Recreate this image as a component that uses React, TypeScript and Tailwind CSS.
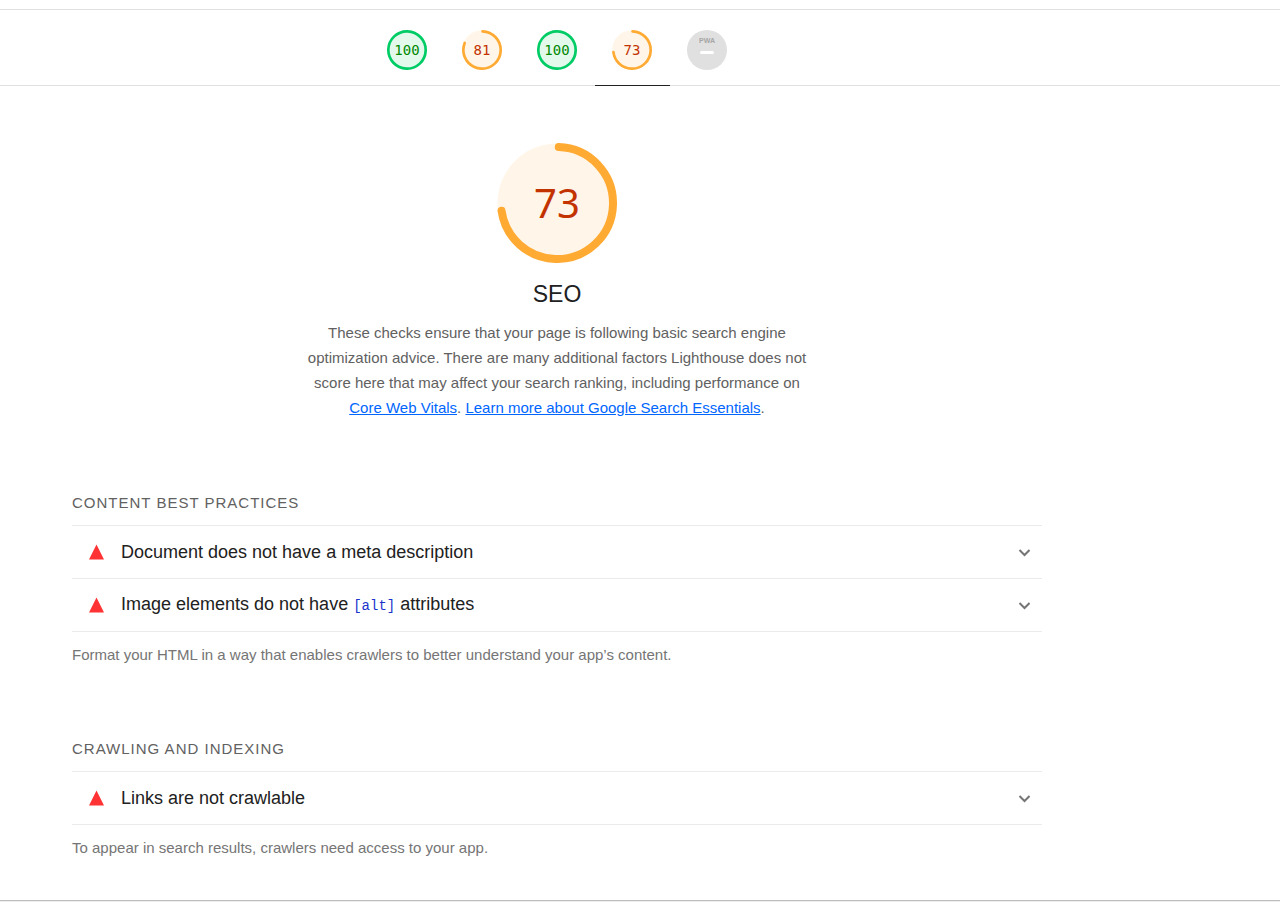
import type { ReactNode } from "react";

type Tone = "pass" | "average";

const tones: Record<Tone, { ring: string; fill: string; text: string }> = {
  pass: { ring: "stroke-[#00cc66]", fill: "fill-[#e2f9ec]", text: "text-[#008800]" },
  average: { ring: "stroke-[#ffaa33]", fill: "fill-[#fff5e8]", text: "text-[#c33300]" },
};

function GaugeRing({ score, tone }: { score: number; tone: Tone }) {
  const full = score === 100;
  const arc = score * 3.6 - 2.6;
  return (
    <svg viewBox="0 0 120 120" className="col-start-1 row-start-1 size-full" aria-hidden="true">
      <circle cx="60" cy="60" r="59.5" className={tones[tone].fill} />
      <circle
        cx="60"
        cy="60"
        r="56"
        fill="none"
        strokeWidth="8"
        strokeLinecap="round"
        pathLength={360}
        strokeDasharray={full ? undefined : `${arc} 360`}
        transform="rotate(-88.2 60 60)"
        className={tones[tone].ring}
      />
    </svg>
  );
}

const categories: { id: string; label: string; score: number; tone: Tone }[] = [
  { id: "performance", label: "Performance", score: 100, tone: "pass" },
  { id: "accessibility", label: "Accessibility", score: 81, tone: "average" },
  { id: "best-practices", label: "Best Practices", score: 100, tone: "pass" },
  { id: "seo", label: "SEO", score: 73, tone: "average" },
];

function Audit({ children }: { children: ReactNode }) {
  return (
    <li className="border-b border-[#ebebeb]">
      <button type="button" className="flex h-[52px] w-full items-center pr-3 pl-4 text-left">
        <svg viewBox="0 0 16 16" className="size-4 shrink-0 fill-[#ff3333]" aria-hidden="true">
          <path d="M8.500 .5 16 15.500H1Z" />
        </svg>
        <span className="ml-[17px] flex-1 text-[18px] leading-6 text-[#212121]">{children}</span>
        <svg
          viewBox="0 0 12 12"
          className="size-3 shrink-0 fill-none stroke-[#757575] stroke-2"
          aria-hidden="true"
        >
          <path d="m1.500 4 5 5 5-5" />
        </svg>
      </button>
    </li>
  );
}

function AuditGroup({ title, note, children }: { title: string; note: string; children: ReactNode }) {
  return (
    <section>
      <h2 className="text-[15px] leading-6 tracking-[1px] text-[#616161] uppercase">{title}</h2>
      <ul className="mt-[10px] border-t border-[#ebebeb]">{children}</ul>
      <p className="mt-[11px] text-[15px] leading-6 text-[#757575]">{note}</p>
    </section>
  );
}

export default function App() {
  return (
    <div className="bg-white pt-[9px] font-['Liberation_Sans',Arial,sans-serif] text-[#212121]">
      <nav className="border-y border-[#e0e0e0]" aria-label="Report categories">
        <div className="-mb-px flex max-w-[1114px] justify-center">
          {categories.map((c) => (
            <a
              key={c.id}
              href={`#${c.id}`}
              aria-label={`${c.label}: ${c.score}`}
              className={`flex h-[76px] w-[75px] justify-center border-b pt-5 ${
                c.id === "seo" ? "border-[#212121]" : "border-transparent"
              }`}
            >
              <span className="grid size-10 place-items-center">
                <GaugeRing score={c.score} tone={c.tone} />
                <span
                  className={`col-start-1 row-start-1 font-['DejaVu_Sans_Mono',monospace] text-[14px] leading-5 ${tones[c.tone].text}`}
                >
                  {c.score}
                </span>
              </span>
            </a>
          ))}
          <a
            href="#pwa"
            className="flex h-[76px] w-[75px] justify-center border-b border-transparent pt-5"
          >
            <span className="flex size-10 flex-col items-center rounded-full bg-[#e0e0e0] pt-[7px]">
              <span className="text-[7px] leading-2 font-bold text-[#a6a6a6]">PWA</span>
              <span className="mt-[6px] h-[3px] w-[14px] rounded-full bg-white" />
            </span>
          </a>
        </div>
      </nav>

      <main className="max-w-[1114px] px-[72px] pt-[57px] pb-10">
        <header id="seo" className="flex flex-col items-center text-center">
          <div className="grid size-[120px] place-items-center">
            <GaugeRing score={73} tone="average" />
            <span className="col-start-1 row-start-1 font-['Noto_Sans',sans-serif] text-[40px] leading-[48px] text-[#c33300]">
              73
            </span>
          </div>
          <h1 className="mt-4 text-[23px] leading-[30px]">SEO</h1>
          <p className="mt-[11px] max-w-[510px] text-[15px] leading-[25px] text-[#616161]">
            These checks ensure that your page is following basic search engine optimization advice.
            There are many additional factors Lighthouse does not score here that may affect your
            search ranking, including performance on{" "}
            <a href="#core-web-vitals" className="text-[#0066ff] underline">
              Core Web Vitals
            </a>
            .{" "}
            <a href="#search-essentials" className="text-[#0066ff] underline">
              Learn more about Google Search Essentials
            </a>
            .
          </p>
        </header>

        <div className="mt-[71px] flex flex-col gap-[70px]">
          <AuditGroup
            title="Content Best Practices"
            note="Format your HTML in a way that enables crawlers to better understand your app’s content."
          >
            <Audit>Document does not have a meta description</Audit>
            <Audit>
              Image elements do not have{" "}
              <code className="font-['Liberation_Mono',monospace] text-[14px] text-[#1a33cc]">
                [alt]
              </code>{" "}
              attributes
            </Audit>
          </AuditGroup>
          <AuditGroup
            title="Crawling and Indexing"
            note="To appear in search results, crawlers need access to your app."
          >
            <Audit>Links are not crawlable</Audit>
          </AuditGroup>
        </div>
      </main>
      <footer className="border-t border-[#bdbdbd] bg-[#eeeeee] pb-px" />
    </div>
  );
}
